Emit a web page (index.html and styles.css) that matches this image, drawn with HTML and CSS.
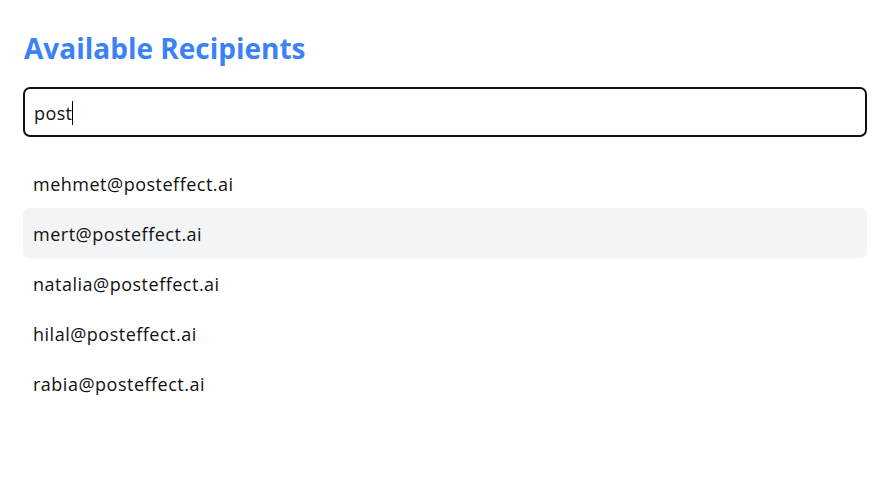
FILE: index.html
```html
<!DOCTYPE html>
<html>
<head>
<meta charset="utf-8">
<link rel="stylesheet" href="styles.css">
</head>
<body>
<div class="panel">
  <h2 class="title">Available Recipients</h2>
  <div class="search">
    <span class="search-text">post</span><span class="caret"></span>
  </div>
  <ul class="list">
    <li class="item">mehmet@posteffect.ai</li>
    <li class="item item-active">mert@posteffect.ai</li>
    <li class="item">natalia@posteffect.ai</li>
    <li class="item">hilal@posteffect.ai</li>
    <li class="item">rabia@posteffect.ai</li>
  </ul>
</div>
</body>
</html>
```
FILE: styles.css
```css
html, body {
  margin: 0;
  padding: 0;
  background: #ffffff;
}
body {
  font-family: "Open Sans", "Noto Sans", sans-serif;
  color: #111111;
}
.panel {
  padding: 24px 24px 0 23px;
  display: flex;
  flex-direction: column;
}
.title {
  margin: 6px 0 0 1px;
  font-size: 28px;
  line-height: 36px;
  font-weight: 700;
  color: #3b82f6;
}
.search {
  box-sizing: border-box;
  margin-top: 21px;
  height: 50px;
  border: 2px solid #111111;
  border-radius: 7px;
  display: flex;
  align-items: center;
  padding: 2px 0 0 9px;
  font-size: 18px;
}
.search-text {
  letter-spacing: 0.4px;
}
.caret {
  display: inline-block;
  width: 1px;
  height: 24px;
  background: #000;
}
.list {
  list-style: none;
  margin: 21px 0 0 0;
  padding: 0;
  display: flex;
  flex-direction: column;
}
.item {
  box-sizing: border-box;
  height: 50px;
  display: flex;
  align-items: center;
  padding: 2px 0 0 10px;
  font-size: 18px;
  letter-spacing: 0.5px;
  border-radius: 6px;
  color: #111111;
}
.item-active {
  background: #f3f4f6;
}
```
